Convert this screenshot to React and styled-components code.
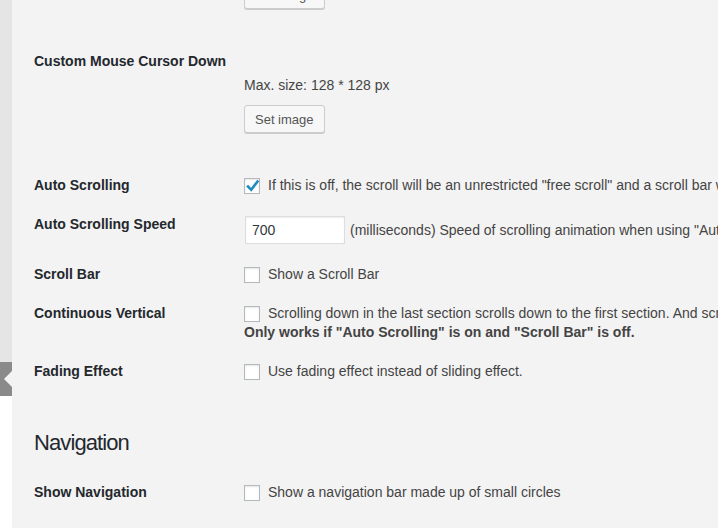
import React from "react";
import styled, { createGlobalStyle } from "styled-components";

const GlobalStyle = createGlobalStyle`
  html, body { margin: 0; padding: 0; }
  body {
    background: #f3f3f3;
    font-family: "Liberation Sans", Arial, sans-serif;
    overflow: hidden;
  }
`;

const Layout = styled.div`
  display: flex;
  height: 528px;
  overflow: hidden;
`;

const Sidebar = styled.div`
  width: 12px;
  flex-shrink: 0;
  display: flex;
  flex-direction: column;
`;

const SideTop = styled.div`
  height: 362px;
  background: #e5e5e5;
`;

const SideActive = styled.div`
  height: 34px;
  background: #8a8a8a;
  position: relative;
  &::after {
    content: "";
    position: absolute;
    right: 0;
    top: 9px;
    border-style: solid;
    border-width: 8px 8px 8px 0;
    border-color: transparent #f3f3f3 transparent transparent;
  }
`;

const SideRest = styled.div`
  flex: 1;
  background: #ffffff;
`;

const Main = styled.main`
  flex: 1;
  min-width: 0;
  padding-left: 22px;
  overflow: hidden;
`;

/* emulates the page being scrolled down */
const Scrolled = styled.div`
  margin-top: -82px;
`;

const Row = styled.div`
  display: grid;
  grid-template-columns: 210px 1fr;
  padding: 10px 0;
`;

const Label = styled.div`
  font-size: 14px;
  font-weight: 700;
  line-height: 19px;
  color: #23282d;
`;

const Field = styled.div`
  min-width: 0;
  font-size: 14px;
  line-height: 19px;
  color: #444;
  white-space: nowrap;
  overflow: hidden;
  padding-bottom: ${(p) => (p.$image ? "23px" : "0")};
`;

const Preview = styled.div`
  height: 24px;
`;

const Note = styled.p`
  margin: 0;
`;

const Strong = styled.p`
  margin: 0;
  font-weight: 700;
`;

const Button = styled.button`
  display: block;
  margin-top: 10px;
  height: 28px;
  padding: 0 10px;
  font-family: "Liberation Sans", Arial, sans-serif;
  font-size: 13px;
  color: #555;
  background: #f7f7f7;
  border: 1px solid #cccccc;
  border-radius: 3px;
  box-shadow: 0 1px 0 #cccccc;
  cursor: pointer;
`;

const Line = styled.div`
  display: flex;
  align-items: center;
  gap: ${(p) => p.$gap || "8px"};
`;

const Box = styled.span`
  flex-shrink: 0;
  position: relative;
  width: 16px;
  height: 16px;
  box-sizing: border-box;
  background: #fff;
  border: 1px solid #b4b9be;
  box-shadow: inset 0 1px 2px rgba(0, 0, 0, 0.1);
  svg {
    position: absolute;
    left: -1px;
    top: -2px;
  }
`;

const Input = styled.input`
  width: 100px;
  height: 28px;
  margin: 1px 0 1px 1px;
  box-sizing: border-box;
  padding: 0 6px;
  font-family: "Liberation Sans", Arial, sans-serif;
  font-size: 14px;
  color: #32373c;
  background: #fff;
  border: 1px solid #dddddd;
  box-shadow: inset 0 1px 2px rgba(0, 0, 0, 0.07);
  outline: none;
`;

const Heading = styled.h2`
  margin: 37px 0 16px;
  font-size: 22px;
  letter-spacing: -0.9px;
  line-height: 29px;
  font-weight: 400;
  color: #23282d;
`;

function Checkbox({ checked }) {
  return (
    <Box>
      {checked && (
        <svg width="17" height="18" viewBox="0 0 17 18">
          <path
            d="M4 9.5 L7.2 12.8 L13.5 4.5"
            fill="none"
            stroke="#1e8cbe"
            strokeWidth="2.6"
            strokeLinecap="square"
          />
        </svg>
      )}
    </Box>
  );
}

function ImageRow({ label }) {
  return (
    <Row>
      <Label>{label}</Label>
      <Field $image>
        <Preview />
        <Note>Max. size: 128 * 128 px</Note>
        <Button type="button">Set image</Button>
      </Field>
    </Row>
  );
}

function CheckRow({ label, checked, text, extra }) {
  return (
    <Row>
      <Label>{label}</Label>
      <Field>
        <Line>
          <Checkbox checked={checked} />
          <span>{text}</span>
        </Line>
        {extra && <Strong>{extra}</Strong>}
      </Field>
    </Row>
  );
}

export default function App() {
  return (
    <>
      <GlobalStyle />
      <Layout>
        <Sidebar>
          <SideTop />
          <SideActive />
          <SideRest />
        </Sidebar>
        <Main>
          <Scrolled>
            <ImageRow label="Custom Mouse Cursor" />
            <ImageRow label="Custom Mouse Cursor Down" />
            <CheckRow
              label="Auto Scrolling"
              checked
              text={'If this is off, the scroll will be an unrestricted "free scroll" and a scroll bar will be shown.'}
            />
            <Row>
              <Label>Auto Scrolling Speed</Label>
              <Field>
                <Line $gap="5px">
                  <Input defaultValue="700" />
                  <span>(milliseconds) Speed of scrolling animation when using "Auto Scrolling".</span>
                </Line>
              </Field>
            </Row>
            <CheckRow label="Scroll Bar" text="Show a Scroll Bar" />
            <CheckRow
              label="Continuous Vertical"
              text="Scrolling down in the last section scrolls down to the first section. And scrolling up in the first section scrolls up to the last one."
              extra={'Only works if "Auto Scrolling" is on and "Scroll Bar" is off.'}
            />
            <CheckRow label="Fading Effect" text="Use fading effect instead of sliding effect." />
            <Heading>Navigation</Heading>
            <CheckRow label="Show Navigation" text="Show a navigation bar made up of small circles" />
          </Scrolled>
        </Main>
      </Layout>
    </>
  );
}
